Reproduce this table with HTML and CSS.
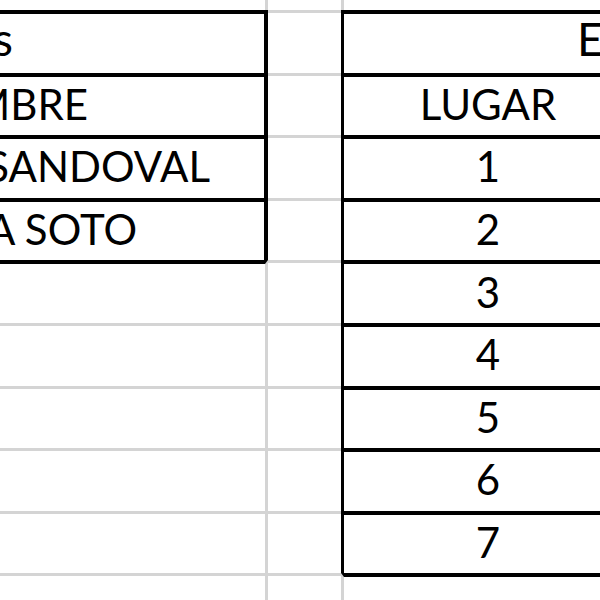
FILE: index.html
```html
<!DOCTYPE html>
<html lang="es">
<head>
<meta charset="utf-8">
<title>Hoja</title>
<link rel="stylesheet" href="styles.css">
</head>
<body>
<div class="sheet">
  <div class="cell a top"></div>
  <div class="cell b top"></div>
  <div class="cell c top"></div>

  <div class="cell a bt br title"><span class="txt r-title">s</span></div>
  <div class="cell b"></div>
  <div class="cell c bt bl title"><span class="txt l-title">E</span></div>

  <div class="cell a bt br"><span class="txt r-nombre">NOMBRE</span></div>
  <div class="cell b"></div>
  <div class="cell c bt bl"><span class="txt">LUGAR</span></div>

  <div class="cell a bt br"><span class="txt r-n1">SANDOVAL</span></div>
  <div class="cell b"></div>
  <div class="cell c bt bl"><span class="txt">1</span></div>

  <div class="cell a bt br"><span class="txt r-n2">A SOTO</span></div>
  <div class="cell b"></div>
  <div class="cell c bt bl"><span class="txt">2</span></div>

  <div class="cell a bt"></div>
  <div class="cell b"></div>
  <div class="cell c bt bl"><span class="txt">3</span></div>

  <div class="cell a"></div>
  <div class="cell b"></div>
  <div class="cell c bt bl"><span class="txt">4</span></div>

  <div class="cell a"></div>
  <div class="cell b"></div>
  <div class="cell c bt bl"><span class="txt">5</span></div>

  <div class="cell a"></div>
  <div class="cell b"></div>
  <div class="cell c bt bl"><span class="txt">6</span></div>

  <div class="cell a"></div>
  <div class="cell b"></div>
  <div class="cell c bt bl"><span class="txt">7</span></div>

  <div class="cell a"></div>
  <div class="cell b"></div>
  <div class="cell c bt"></div>
</div>
</body>
</html>
```

FILE: styles.css
```css
html, body {
  margin: 0;
  padding: 0;
  background: #ffffff;
  overflow: hidden;
  width: 600px;
  height: 600px;
}

.sheet {
  display: grid;
  grid-template-columns: 268px 73px 291px;
  grid-template-rows: 10px repeat(9, 62.6px) 60px;
  font-family: Lato, "Open Sans", sans-serif;
  font-size: 42px;
  color: #000;
}

.cell {
  box-sizing: border-box;
  display: flex;
  align-items: center;
  border-top: 3px solid #d4d4d4;
  padding-bottom: 4px;
  min-width: 0;
  overflow: visible;
}

.cell.top {
  border-top: none;
  padding-bottom: 0;
}

.a {
  border-right: 3px solid #d4d4d4;
  justify-content: flex-end;
}

.c {
  border-left: 3px solid #d4d4d4;
  justify-content: center;
}

.bt {
  border-top: 4px solid #000;
}

.br {
  border-right: 4px solid #000;
}

.bl {
  border-left: 3px solid #000;
}

.txt {
  white-space: nowrap;
  line-height: 42px;
  flex: none;
}

.title {
  font-size: 46px;
  padding-bottom: 9px;
}

.title .txt {
  line-height: 46px;
}

.c.title {
  justify-content: flex-start;
}

.l-title { margin-left: 233px; }
.r-title { margin-right: 251px; }
.r-nombre { margin-right: 176px; }
.r-n1 { margin-right: 54px; }
.r-n2 { margin-right: 127px; }
```
